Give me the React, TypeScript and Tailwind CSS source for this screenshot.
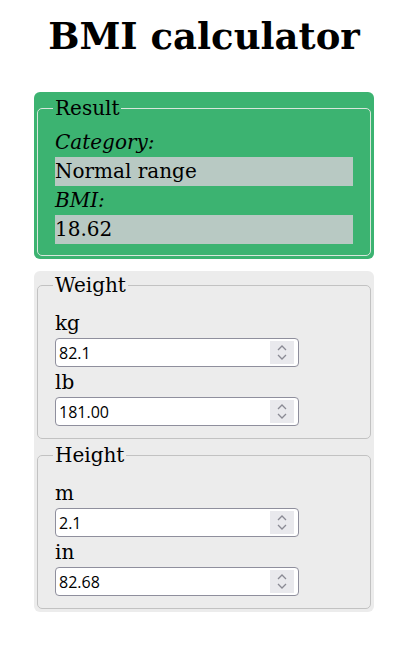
import React from 'react';

function Spinner() {
  return (
    <span className="absolute right-[4px] top-[2px] bottom-[2px] w-[24px] bg-[#e9e9ed] flex flex-col items-center justify-center gap-[3px]">
      <svg width="10" height="6" viewBox="0 0 10 6" fill="none" stroke="#8a8a94" strokeWidth="1.3">
        <path d="M1 5 L5 1 L9 5" />
      </svg>
      <svg width="10" height="6" viewBox="0 0 10 6" fill="none" stroke="#8a8a94" strokeWidth="1.3">
        <path d="M1 1 L5 5 L9 1" />
      </svg>
    </span>
  );
}

function NumberField({ label, value }: { label: string; value: string }) {
  return (
    <>
      <label className="block text-[20px] leading-[30px] h-[30px]">{label}</label>
      <div className="relative w-[244px] h-[29px] bg-white border border-[#8f8f9d] rounded-[4px]">
        <input
          type="text"
          readOnly
          value={value}
          className="w-full h-full pl-[3px] pr-[30px] bg-transparent outline-none text-[16px] text-black font-['Open_Sans',sans-serif]"
        />
        <Spinner />
      </div>
    </>
  );
}

function Output({ label, value }: { label: string; value: string }) {
  return (
    <>
      <div className="italic text-[20px] leading-[29px] h-[29px]">{label}</div>
      <output className="block bg-[#b8c9c3] h-[29px] leading-[29px] text-[20px]">{value}</output>
    </>
  );
}

export default function App() {
  return (
    <div className="w-[414px] min-h-[652px] bg-white text-black font-['DejaVu_Serif',serif] pt-[13px]">
      <div className="ml-[34px] w-[340px]">
        <h1 className="text-center font-bold text-[37px] leading-[46px] mb-[33px]">BMI calculator</h1>

        <section className="bg-[#3cb371] rounded-[6px] p-[3px]">
          <fieldset className="border border-[#d8e6dc] rounded-[5px] px-[17px] pb-[11px]">
            <legend className="text-[20px] leading-[26px] px-[2px] -ml-[2px]">Result</legend>
            <div className="mt-[7px]">
              <Output label="Category:" value="Normal range" />
              <Output label="BMI:" value="18.62" />
            </div>
          </fieldset>
        </section>

        <section className="mt-[12px] bg-[#ececec] rounded-[6px] p-[3px] flex flex-col gap-[5px]">
          <fieldset className="border border-[#c2c2c2] rounded-[5px] px-[17px] pb-[12px]">
            <legend className="text-[20px] leading-[22px] px-[2px] -ml-[2px]">Weight</legend>
            <div className="mt-[12px]">
              <NumberField label="kg" value="82.1" />
              <NumberField label="lb" value="181.00" />
            </div>
          </fieldset>
          <fieldset className="border border-[#c2c2c2] rounded-[5px] px-[17px] pb-[12px]">
            <legend className="text-[20px] leading-[22px] px-[2px] -ml-[2px]">Height</legend>
            <div className="mt-[12px]">
              <NumberField label="m" value="2.1" />
              <NumberField label="in" value="82.68" />
            </div>
          </fieldset>
        </section>
      </div>
    </div>
  );
}
